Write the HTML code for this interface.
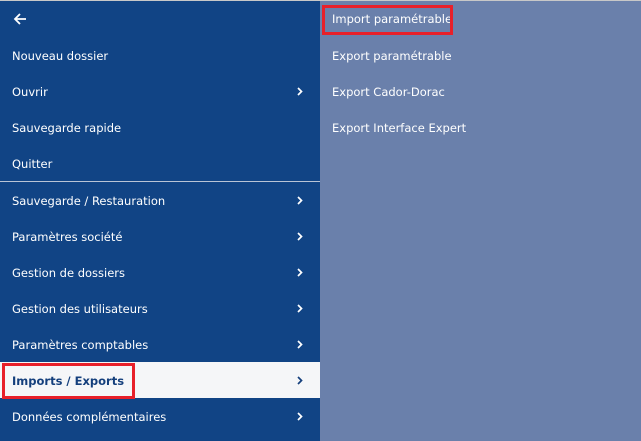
<!DOCTYPE html>
<html><head><meta charset="utf-8"><style>
*{margin:0;padding:0;box-sizing:border-box}
body{width:641px;height:441px;overflow:hidden;background:#6a80ab;font-family:"DejaVu Sans","Liberation Sans",sans-serif;font-size:11.5px;color:#fff;position:relative}
.top{position:absolute;left:0;top:0;width:641px;height:1px;background:#c8c8c8}
.left{position:absolute;left:0;top:1px;width:320px;height:440px;background:#114485}
.row{position:absolute;left:0;width:320px;height:36px;line-height:38px;padding-left:12px}
.chev{position:absolute;left:297px;top:14px}
.sel{background:#f5f6f8;color:#143f7c;font-weight:bold}
.sep{position:absolute;left:0;top:181px;width:320px;height:1px;background:#b9c4d6}
.red{position:absolute;border:3px solid #e8202a}
.r{position:absolute;left:332px;height:36px;line-height:38px}
</style></head><body>
<div class="top"></div>
<div class="left"></div>
<svg style="position:absolute;left:13px;top:12px" width="14" height="14" viewBox="0 0 14 14"><path d="M13 7H2M7 2L2 7l5 5" stroke="#fff" stroke-width="1.8" fill="none"/></svg>
<svg width="0" height="0" style="position:absolute"><defs><symbol id="c" viewBox="0 0 6 9"><path d="M1 1l3.5 3.5L1 8" stroke="currentColor" stroke-width="1.7" fill="none"/></symbol></defs></svg>
<div class="row" style="top:37px">Nouveau dossier</div>
<div class="row" style="top:73px">Ouvrir<svg class="chev" width="6" height="9"><use href="#c"/></svg></div>
<div class="row" style="top:109px">Sauvegarde rapide</div>
<div class="row" style="top:145px">Quitter</div>
<div class="sep"></div>
<div class="row" style="top:182px">Sauvegarde / Restauration<svg class="chev" width="6" height="9"><use href="#c"/></svg></div>
<div class="row" style="top:218px">Paramètres société<svg class="chev" width="6" height="9"><use href="#c"/></svg></div>
<div class="row" style="top:254px">Gestion de dossiers<svg class="chev" width="6" height="9"><use href="#c"/></svg></div>
<div class="row" style="top:290px">Gestion des utilisateurs<svg class="chev" width="6" height="9"><use href="#c"/></svg></div>
<div class="row" style="top:326px">Paramètres comptables<svg class="chev" width="6" height="9"><use href="#c"/></svg></div>
<div class="row sel" style="top:362px">Imports / Exports<svg class="chev" width="6" height="9"><use href="#c"/></svg></div>
<div class="row" style="top:398px">Données complémentaires<svg class="chev" width="6" height="9"><use href="#c"/></svg></div>
<div class="red" style="left:2px;top:363px;width:133px;height:36px"></div>
<div class="r" style="top:0px">Import paramétrable</div>
<div class="r" style="top:37px">Export paramétrable</div>
<div class="r" style="top:73px">Export Cador-Dorac</div>
<div class="r" style="top:109px">Export Interface Expert</div>
<div class="red" style="left:322px;top:5px;width:131px;height:30px"></div>
</body></html>
